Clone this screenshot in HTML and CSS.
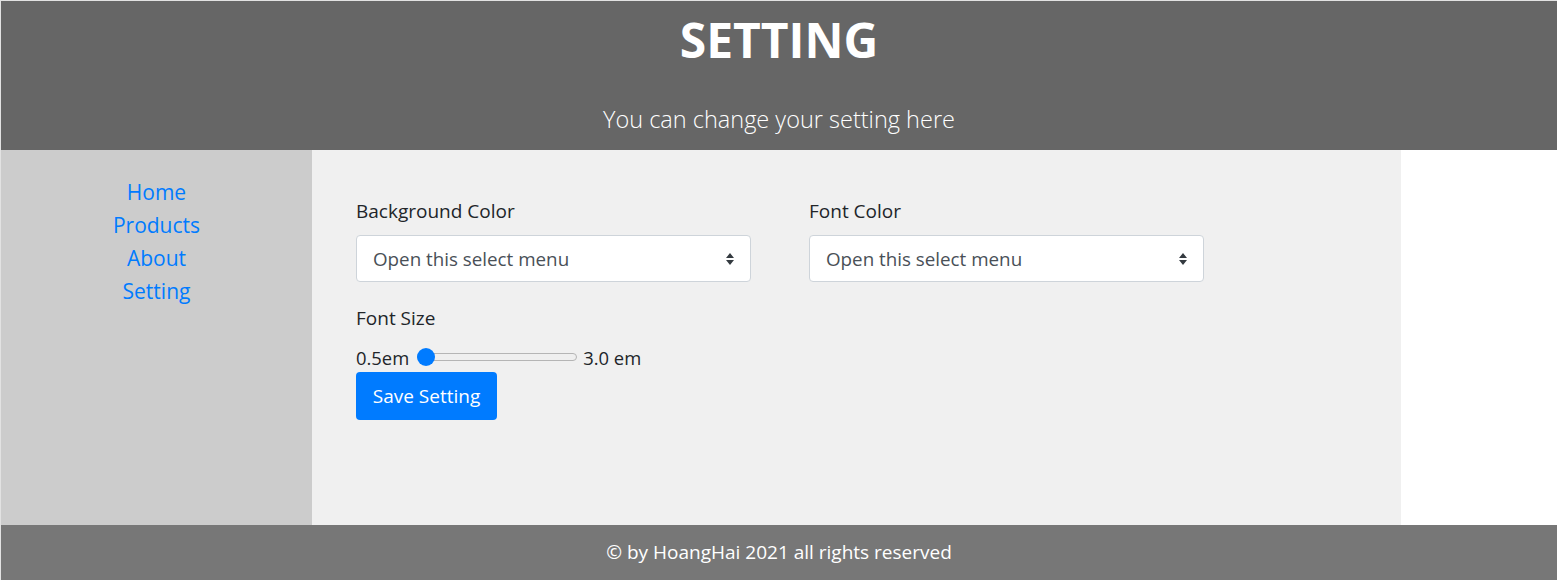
FILE: index.html
```html
<!DOCTYPE html>
<html lang="en">
<head>
<meta charset="utf-8">
<title>Setting</title>
<link rel="stylesheet" href="styles.css">
</head>
<body>
<div class="page">
  <header class="header">
    <h1 class="title">SETTING</h1>
    <p class="subtitle">You can change your setting here</p>
  </header>
  <div class="middle">
    <nav class="sidebar">
      <a href="#" class="nav-link">Home</a>
      <a href="#" class="nav-link">Products</a>
      <a href="#" class="nav-link">About</a>
      <a href="#" class="nav-link">Setting</a>
    </nav>
    <main class="main">
      <div class="selects">
        <div class="field">
          <label class="label">Background Color</label>
          <div class="select">
            <span>Open this select menu</span>
            <svg class="arrows" width="10" height="14" viewBox="0 0 10 14"><path d="M5 1 L9 6 H1 Z M1 8 H9 L5 13 Z" fill="#343a40"/></svg>
          </div>
        </div>
        <div class="field">
          <label class="label">Font Color</label>
          <div class="select">
            <span>Open this select menu</span>
            <svg class="arrows" width="10" height="14" viewBox="0 0 10 14"><path d="M5 1 L9 6 H1 Z M1 8 H9 L5 13 Z" fill="#343a40"/></svg>
          </div>
        </div>
      </div>
      <label class="label size-label">Font Size</label>
      <div class="range-row">
        <span>0.5em</span>
        <div class="range">
          <div class="track"></div>
          <div class="thumb"></div>
        </div>
        <span>3.0 em</span>
      </div>
      <button class="btn">Save Setting</button>
    </main>
    <div class="aside"></div>
  </div>
  <footer class="footer">© by HoangHai 2021 all rights reserved</footer>
</div>
</body>
</html>
```
FILE: styles.css
```css
html, body {
  margin: 0;
  padding: 0;
}
body {
  background: #e2e2e2;
  font-family: "Open Sans", "Noto Sans", sans-serif;
  color: #212529;
}
.page {
  margin: 1px 0 0 1px;
  height: 579px;
  display: flex;
  flex-direction: column;
  background: #fff;
}
.header {
  background: #666666;
  color: #fff;
  height: 149px;
  text-align: center;
  box-sizing: border-box;
  padding-top: 11px;
}
.title {
  margin: 0;
  font-size: 48px;
  font-weight: 700;
  line-height: 56px;
}
.subtitle {
  margin: 36px 0 0;
  font-size: 23.5px;
  font-weight: 300;
  line-height: 30px;
}
.middle {
  display: flex;
  height: 375px;
}
.sidebar {
  width: 311px;
  background: #cccccc;
  display: flex;
  flex-direction: column;
  align-items: center;
  padding-top: 26px;
  box-sizing: border-box;
}
.nav-link {
  color: #007bff;
  text-decoration: none;
  font-size: 21px;
  line-height: 33px;
}
.main {
  width: 1089px;
  background: #f0f0f0;
  box-sizing: border-box;
  padding: 48px 44px 0;
}
.aside {
  flex: 1;
  background: #fff;
}
.selects {
  display: grid;
  grid-template-columns: 395px 395px;
  column-gap: 58px;
}
.label {
  display: block;
  font-size: 19px;
  line-height: 27px;
  margin-bottom: 10px;
}
.select {
  height: 47px;
  background: #fff;
  border: 1px solid #ced4da;
  border-radius: 4px;
  box-sizing: border-box;
  display: flex;
  align-items: center;
  justify-content: space-between;
  padding: 0 15px 0 16px;
  font-size: 18.8px;
  color: #495057;
}
.arrows {
  display: block;
}
.size-label {
  margin-top: 23px;
  margin-bottom: 12px;
}
.range-row {
  display: flex;
  align-items: center;
  gap: 6px;
  font-size: 18.4px;
  height: 26px;
}
.range {
  position: relative;
  width: 160px;
  height: 18px;
  margin-left: 2px;
}
.track {
  position: absolute;
  left: 0;
  right: 0;
  top: 5px;
  height: 8px;
  box-sizing: border-box;
  border: 1px solid #b5b5b5;
  border-radius: 4px;
  background: #efefef;
}
.thumb {
  position: absolute;
  left: 0;
  top: 0;
  width: 18px;
  height: 18px;
  border-radius: 50%;
  background: #007bff;
}
.btn {
  display: block;
  margin-top: 2px;
  height: 48px;
  width: 141px;
  background: #007bff;
  color: #fff;
  border: none;
  border-radius: 4px;
  font-family: inherit;
  font-size: 19px;
  padding: 0;
}
.footer {
  background: #777777;
  color: #fff;
  text-align: center;
  height: 55px;
  line-height: 55px;
  font-size: 19px;
}
```
